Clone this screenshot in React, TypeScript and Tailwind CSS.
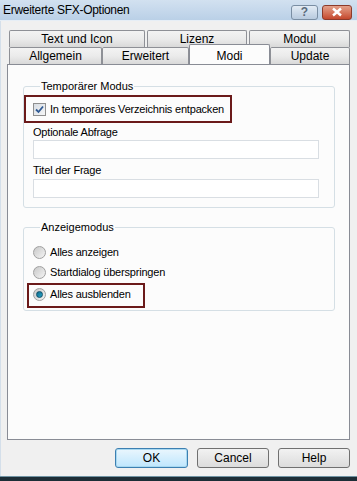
import React from 'react';

const font = { fontFamily: '"Liberation Sans", Arial, sans-serif' };

function Tab({ label, w, selected }: { label: string; w: string; selected?: boolean }) {
    if (selected) {
        return (
            <div className={`${w} h-[20px] -mt-[3px] -mb-[1px] relative z-10 bg-[#fcfcfc] border border-b-0 border-[#898c95] rounded-t-[2px] flex items-start justify-center pt-[2px] text-[12px] text-black`}>
                {label}
            </div>
        );
    }
    return (
        <div className={`${w} h-[17px] bg-gradient-to-b from-[#f3f3f3] via-[#ebebeb] to-[#d9d9d9] border border-b-0 border-[#8e9096] rounded-t-[2px] flex items-center justify-center text-[12px] text-black`}>
            {label}
        </div>
    );
}

function CheckBox() {
    return (
        <div className="w-[13px] h-[13px] border border-[#8f8f8f] bg-gradient-to-br from-[#d8dde3] to-[#f5f6f7] p-[1px] flex items-center justify-center">
            <svg width="9" height="9" viewBox="0 0 9 9">
                <path d="M1 4.5 L3.5 7 L8 1.5" fill="none" stroke="#2f5a94" strokeWidth="1.8" />
            </svg>
        </div>
    );
}

function Radio({ checked }: { checked?: boolean }) {
    return (
        <div className="w-[13px] h-[13px] rounded-full border border-[#a0a0a0] bg-gradient-to-br from-[#c9c9c9] to-[#f4f4f4] flex items-center justify-center">
            {checked && <div className="w-[7px] h-[7px] rounded-full bg-gradient-to-br from-[#0f6a8c] to-[#2aa6c8] border border-[#0d4e68]" />}
        </div>
    );
}

export default function App() {
    return (
        <div className="w-[357px] h-[481px] flex flex-col bg-[#f0f0f0] overflow-hidden text-black" style={font}>
            {/* title bar */}
            <div className="h-[20px] shrink-0 bg-gradient-to-b from-[#d2e1f0] to-[#bad0e7] flex items-center pl-[3px] pr-[5px]">
                <span className="text-[12px] tracking-[-0.3px] text-black flex-1">Erweiterte SFX-Optionen</span>
                <div className="w-[27px] h-[15px] mt-[4px] rounded-[3px] border border-[#7a8ea3] bg-gradient-to-b from-[#e3ecf5] to-[#b8cade] flex items-center justify-center text-[12px] text-[#5a6b7c] font-bold leading-none">?</div>
                <div className="w-[30px] h-[15px] mt-[4px] ml-[4px] rounded-[3px] border border-[#8c3a2a] bg-gradient-to-b from-[#e3a08a] to-[#c4472c] flex items-center justify-center">
                    <svg width="12" height="10" viewBox="0 0 12 10">
                        <path d="M2 1.5 L10 8.5 M10 1.5 L2 8.5" stroke="#ffffff" strokeWidth="2.4" />
                    </svg>
                </div>
            </div>
            <div className="h-[1px] shrink-0 bg-[#e6eef6]" />

            {/* client */}
            <div className="flex-1 flex flex-col pl-[6px] pr-[7px] pt-[9px] border-l border-[#d4dfea]">
                <div className="flex gap-[2px] ml-[2px]">
                    <Tab label="Text und Icon" w="w-[136px]" />
                    <Tab label="Lizenz" w="w-[100px]" />
                    <Tab label="Modul" w="w-[101px]" />
                </div>
                <div className="flex ml-[2px]">
                    <Tab label="Allgemein" w="w-[93px]" />
                    <Tab label="Erweitert" w="w-[87px]" />
                    <Tab label="Modi" w="w-[81px]" selected />
                    <Tab label="Update" w="w-[80px]" />
                </div>

                {/* panel */}
                <div className="h-[376px] bg-[#fcfcfc] border border-[#898c95] pl-[15px] pr-[14px] pt-[14px]">
                    <fieldset className="border border-[#d5dfe5] rounded-[3px] pl-[9px] pr-[15px] pb-[9px]">
                        <legend className="ml-[7px] px-[1px] text-[11px] leading-[14px] text-black">Temporärer Modus</legend>
                        <div className="relative flex items-center gap-[4px] h-[20px] mt-[6px]">
                            <span className="absolute -left-[9px] -top-[4px] w-[208px] h-[28px] border-2 border-[#6b1a1a]" />
                            <CheckBox />
                            <span className="text-[11px] tracking-[-0.2px]">In temporäres Verzeichnis entpacken</span>
                        </div>
                        <div className="text-[11px] tracking-[-0.2px] leading-[14px] mt-[6px]">Optionale Abfrage</div>
                        <div className="h-[19px] mt-[1px] border border-[#d9dee3] bg-white" />
                        <div className="text-[11px] tracking-[-0.2px] leading-[14px] mt-[4px]">Titel der Frage</div>
                        <div className="h-[19px] mt-[2px] border border-[#d9dee3] bg-white" />
                    </fieldset>

                    <fieldset className="border border-[#d5dfe5] rounded-[3px] pl-[9px] pr-[15px] pb-[6px] mt-[12px]">
                        <legend className="ml-[7px] px-[1px] text-[11px] leading-[14px] text-black">Anzeigemodus</legend>
                        <div className="flex items-center gap-[4px] h-[20px] mt-[8px]">
                            <Radio />
                            <span className="text-[11px] tracking-[-0.2px]">Alles anzeigen</span>
                        </div>
                        <div className="flex items-center gap-[4px] h-[20px]">
                            <Radio />
                            <span className="text-[11px] tracking-[-0.2px]">Startdialog überspringen</span>
                        </div>
                        <div className="relative flex items-center gap-[4px] h-[20px] mt-[2px]">
                            <span className="absolute -left-[6px] -top-[1px] w-[118px] h-[25px] border-2 border-[#6b1a1a]" />
                            <Radio checked />
                            <span className="text-[11px] tracking-[-0.2px]">Alles ausblenden</span>
                        </div>
                    </fieldset>
                </div>

                {/* buttons */}
                <div className="flex justify-end gap-[9px] mt-[8px]">
                    <button className="w-[73px] h-[20px] rounded-[3px] border border-[#3c7fb1] bg-gradient-to-b from-[#eaf6fd] to-[#bee6fd] text-[12px] shadow-[inset_0_0_0_1px_#a8d8f0]">OK</button>
                    <button className="w-[72px] h-[20px] rounded-[3px] border border-[#707070] bg-gradient-to-b from-[#f2f2f2] to-[#dcdcdc] text-[12px]">Cancel</button>
                    <button className="w-[72px] h-[20px] rounded-[3px] border border-[#707070] bg-gradient-to-b from-[#f2f2f2] to-[#dcdcdc] text-[12px]">Help</button>
                </div>
            </div>

            <div className="h-[1px] shrink-0 bg-[#6f93a3]" />
            <div className="h-[4px] shrink-0 bg-[#1c2d36]" />
        </div>
    );
}
